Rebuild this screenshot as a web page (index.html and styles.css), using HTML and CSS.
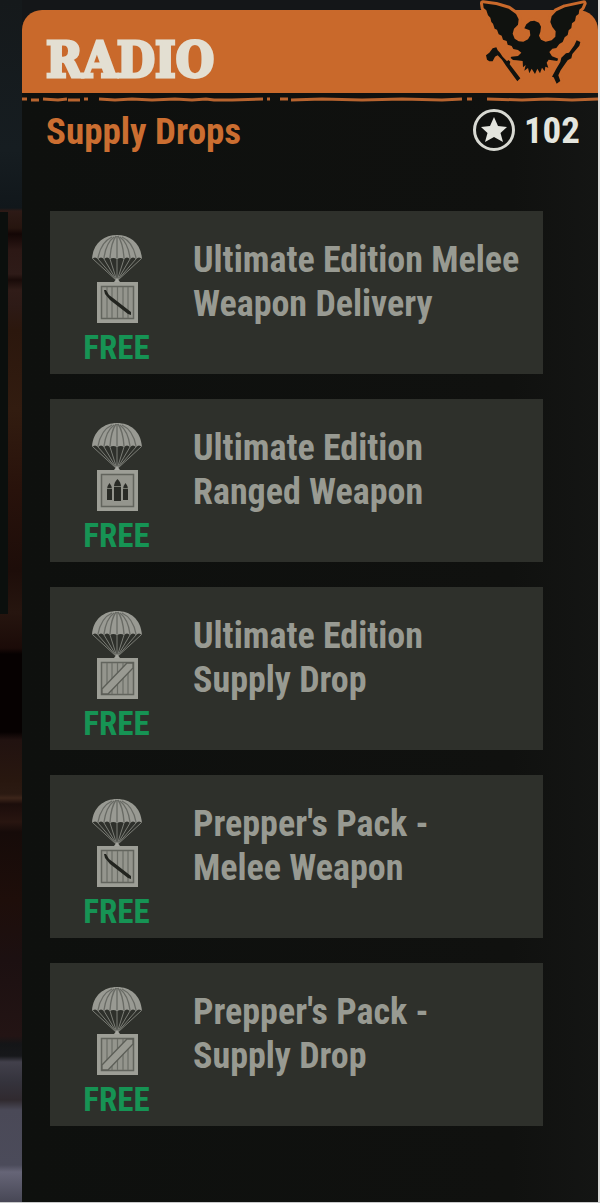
FILE: index.html
```html
<!DOCTYPE html>
<html lang="en">
<head>
<meta charset="utf-8">
<meta name="viewport" content="width=device-width, initial-scale=1">
<title>Radio - Supply Drops</title>
<link rel="stylesheet" href="styles.css">
</head>
<body>
<svg class="defs" width="0" height="0" aria-hidden="true">
  <defs>
    <g id="chute">
      <path d="M0 24C1 8 12 0 25 0s24 8 25 24q-3-3-6 0q-3-3-6 0q-3-3-6 0q-3-2-7 0q-4-2-7 0q-3-3-6 0q-3-3-6 0q-3-3-6 0z" fill="#999a93"/>
      <path d="M6 23Q9 7 20 2M12 23Q14 8 22 2M18 23Q19 8 24 1M25 23V1M32 23Q31 8 26 1M38 23Q36 8 28 2M44 23Q41 7 30 2" fill="none" stroke="#696b65" stroke-width="1.3"/>
      <path d="M1 24L25 46L49 24M6 24L25 46L44 24M12 24L25 46L38 24M18 24L25 46L32 24M25 24V46" fill="none" stroke="#7b7d76" stroke-width="1"/>
      <path d="M22 47l3-4 3 4z" fill="#a5a69f"/>
    </g>
    <g id="crate">
      <path d="M5 47H46V88H5z" fill="#9d9e96"/>
      <path d="M9.500 51.500H41.500V83.500H9.500z" fill="#94958d" stroke="#62645d" stroke-width="1.500"/>
    </g>
    <path id="slats" d="M15 52V83M20 52V83M25.500 52V83M31 52V83M36 52V83" stroke="#6c6e67" stroke-width="1.200"/>
    <g id="melee">
      <use href="#chute"/><use href="#crate"/><use href="#slats"/>
      <path d="M12 55l2 0 3 5 4 3 18 14 0 3-3-1-18-14-5-6z" fill="#22241f"/>
    </g>
    <g id="ranged">
      <use href="#chute"/><use href="#crate"/>
      <path d="M22 78V64q0-5 3.500-8q3.500 3 3.500 8V78zM15 77V66q0-3 2.500-6q2.500 3 2.500 6V77zM31 77V66q0-3 2.500-6q2.500 3 2.500 6V77z" fill="#292b26"/>
      <path d="M15 65.500h5M31 65.500h5M22 63.500h7" stroke="#777970"/>
    </g>
    <g id="supply">
      <use href="#chute"/><use href="#crate"/><use href="#slats"/>
      <path d="M10 78L35 52H41V57L16 83H10z" fill="#999a92" stroke="#5c5e57" stroke-width="1.300"/>
    </g>
  </defs>
</svg>
<main class="panel">
  <header class="banner">
    <h1 class="title">RADIO</h1>
    <svg class="eagle" viewBox="54 0 330 261" aria-hidden="true">
      <g class="eagle-shape">
        <path d="M69 10L108 15L146 26L168 42L176 58L174 74L162 86L158 101L164 116L176 124L190 125L204 118L211 106L209 91L193 85L199 73L211 64L223 62L237 68L243 80L241 96L237 107L243 119L257 125L275 121L286 110L287 94L277 81L271 66L275 49L289 34L315 22L371 10L365 23L358 29L356 42L348 48L345 63L336 70L334 84L326 91L323 105L314 112L308 126L298 132L289 144L277 146L268 156L276 169L297 177L292 183L266 179L260 188L265 203L256 200L254 214L246 203L240 220L232 206L225 222L215 206L208 220L204 204L193 212L197 195L189 202L188 183L170 181L148 179L154 170L174 168L184 158L174 150L160 147L155 138L143 134L140 123L129 119L125 107L116 103L111 89L104 86L99 71L94 66L91 53L84 46L79 31L71 24Z"/>
        <path d="M78 166L88 158L98 145L109 142L113 151L120 158L128 170L141 184L145 180L151 185L149 193L181 235L172 244L138 197L126 179L113 166L105 170L98 184L88 184L81 179Z"/>
        <path d="M350 121L361 126L358 137L337 162L334 175L323 181L302 211L295 226L301 243L290 251L281 232L276 230L288 208L301 186L304 173L318 160L327 158L343 136Z"/>
      </g>
    </svg>
  </header>
  <svg class="torn" viewBox="0 0 576 10" preserveAspectRatio="none" aria-hidden="true">
    <path d="M0 6H5M9 7H17M21 6L36 7L45 6M46 7H58M62 6H66M77 6L93 7L110 6L130 7L153 6L170 7L184 6L192 7L210 7L241 6M245 6H248M258 6H266M269 7L300 6L340 7L380 6L420 7L440 6M445 6H450M465 6L500 7L525 6L550 7L576 6"/>
  </svg>
  <div class="subhead">
    <h2 class="section">Supply Drops</h2>
    <div class="influence">
      <svg class="star" viewBox="0 0 44 44" aria-hidden="true">
        <circle cx="22" cy="22" r="19.500" fill="none" stroke="#d8d9d2" stroke-width="3"/>
        <path d="M22 9L26 18L35 19L28.500 25L31 34L22 29L13 34L15.500 25L9 19L18 18Z" fill="#e4e5de"/>
      </svg>
      <span>102</span>
    </div>
  </div>
  <div class="drops">
    <button class="drop" type="button">
      <span class="cost"><svg class="icon" viewBox="0 0 50 88" aria-hidden="true"><use href="#melee"/></svg><span class="free">FREE</span></span>
      <span class="name">Ultimate Edition Melee Weapon Delivery</span>
    </button>
    <button class="drop" type="button">
      <span class="cost"><svg class="icon" viewBox="0 0 50 88" aria-hidden="true"><use href="#ranged"/></svg><span class="free">FREE</span></span>
      <span class="name">Ultimate Edition<br>Ranged Weapon</span>
    </button>
    <button class="drop" type="button">
      <span class="cost"><svg class="icon" viewBox="0 0 50 88" aria-hidden="true"><use href="#supply"/></svg><span class="free">FREE</span></span>
      <span class="name">Ultimate Edition<br>Supply Drop</span>
    </button>
    <button class="drop" type="button">
      <span class="cost"><svg class="icon" viewBox="0 0 50 88" aria-hidden="true"><use href="#melee"/></svg><span class="free">FREE</span></span>
      <span class="name">Prepper's Pack -<br>Melee Weapon</span>
    </button>
    <button class="drop" type="button">
      <span class="cost"><svg class="icon" viewBox="0 0 50 88" aria-hidden="true"><use href="#supply"/></svg><span class="free">FREE</span></span>
      <span class="name">Prepper's Pack -<br>Supply Drop</span>
    </button>
  </div>
</main>
</body>
</html>
```
FILE: styles.css
```css
* {
  box-sizing: border-box;
}

body {
  margin: 0;
  min-height: 100vh;
  display: flex;
  padding: 0 2px 0 22px;
  border-bottom: 1px solid #c9cacb;
  font-family: "Roboto Condensed", "Liberation Sans Narrow", "Liberation Sans", sans-serif;
  font-weight: 700;
  background:
    linear-gradient(#d9d9d7, #d9d9d7) right / 2px 100% no-repeat,
    linear-gradient(#0b0f0d, #0b0f0d) 0 212px / 8px 402px no-repeat,
    linear-gradient(
      #15191b 0, #161d21 150px, #11171b 208px,
      #2d1a16 211px, #26150f 228px, #130605 234px, #2c1815 250px,
      #2e1b18 274px, #190b09 280px, #301c18 290px, #2d1a16 306px,
      #2b170d 330px, #321c10 410px, #28120b 490px, #1d0d09 570px,
      #26150f 612px, #1b0b08 648px, #060101 654px, #060101 732px,
      #211210 740px, #28170f 780px, #2b1a12 794px, #3c251a 798px,
      #1b0d0b 804px, #281510 822px, #160b09 832px, #1e0e0a 900px,
      #1c1011 960px, #231414 1036px, #141517 1044px, #17181b 1056px,
      #42404b 1062px, #34333c 1082px, #302a2f 1100px, #4a4957 1110px,
      #4b4b5a 1165px, #666577 1172px, #464654 1203px
    ) #111;
}

.defs {
  position: absolute;
}

.panel {
  flex: 1;
  min-width: 0;
  padding-top: 10px;
  position: relative;
  background: linear-gradient(90deg, #0e100e, #10110f 85%, #141514);
}

.panel::before {
  content: "";
  position: absolute;
  inset: 0 0 auto;
  height: 34px;
  background: #141618;
}

.banner {
  position: relative;
  height: 83px;
  padding: 20px 24px 0;
  border-radius: 20px 20px 0 0;
  background: #c9692b;
}

.title {
  margin: 0;
  font: 700 49px/60px "DejaVu Serif Condensed", "DejaVu Serif", serif;
  color: #e3dfd2;
  -webkit-text-stroke: 3px #e3dfd2;
}

.eagle {
  position: absolute;
  top: -10px;
  right: 10px;
  width: 110px;
  height: 87px;
  overflow: visible;
}

.eagle-shape {
  fill: #10120f;
  stroke: #c9692b;
  stroke-width: 18px;
  stroke-linejoin: round;
  paint-order: stroke;
}

.torn {
  display: block;
  width: 100%;
  height: 10px;
  fill: none;
  stroke: #b8642f;
  stroke-width: 3px;
}

.subhead {
  display: flex;
  justify-content: space-between;
  align-items: center;
  height: 54px;
  padding: 0 18px 0 24px;
  color: #e4e5de;
  font-size: 37px;
}

.section {
  margin: 0;
  padding-top: 2px;
  color: #cb6e31;
  font-size: 37px;
}

.influence {
  display: flex;
  align-items: center;
  gap: 8px;
}

.star {
  width: 44px;
  height: 44px;
}

.drops {
  display: grid;
  gap: 25px;
  padding: 54px 55px 74px 28px;
}

.drop {
  display: flex;
  align-items: flex-start;
  min-height: 163px;
  padding: 24px 8px 0 34px;
  border: 0;
  background: #2e302b;
  color: #989a92;
  font: inherit;
  text-align: left;
  cursor: pointer;
}

.drop:hover {
  background: #383a34;
}

.cost {
  display: flex;
  flex-direction: column;
  align-items: center;
  flex: none;
  width: 65px;
  margin-right: 44px;
}

.icon {
  width: 50px;
  height: 88px;
}

.free {
  color: #169354;
  font-size: 33px;
  line-height: 50px;
}

.name {
  padding-top: 3px;
  font-size: 36px;
  line-height: 44px;
}
```
